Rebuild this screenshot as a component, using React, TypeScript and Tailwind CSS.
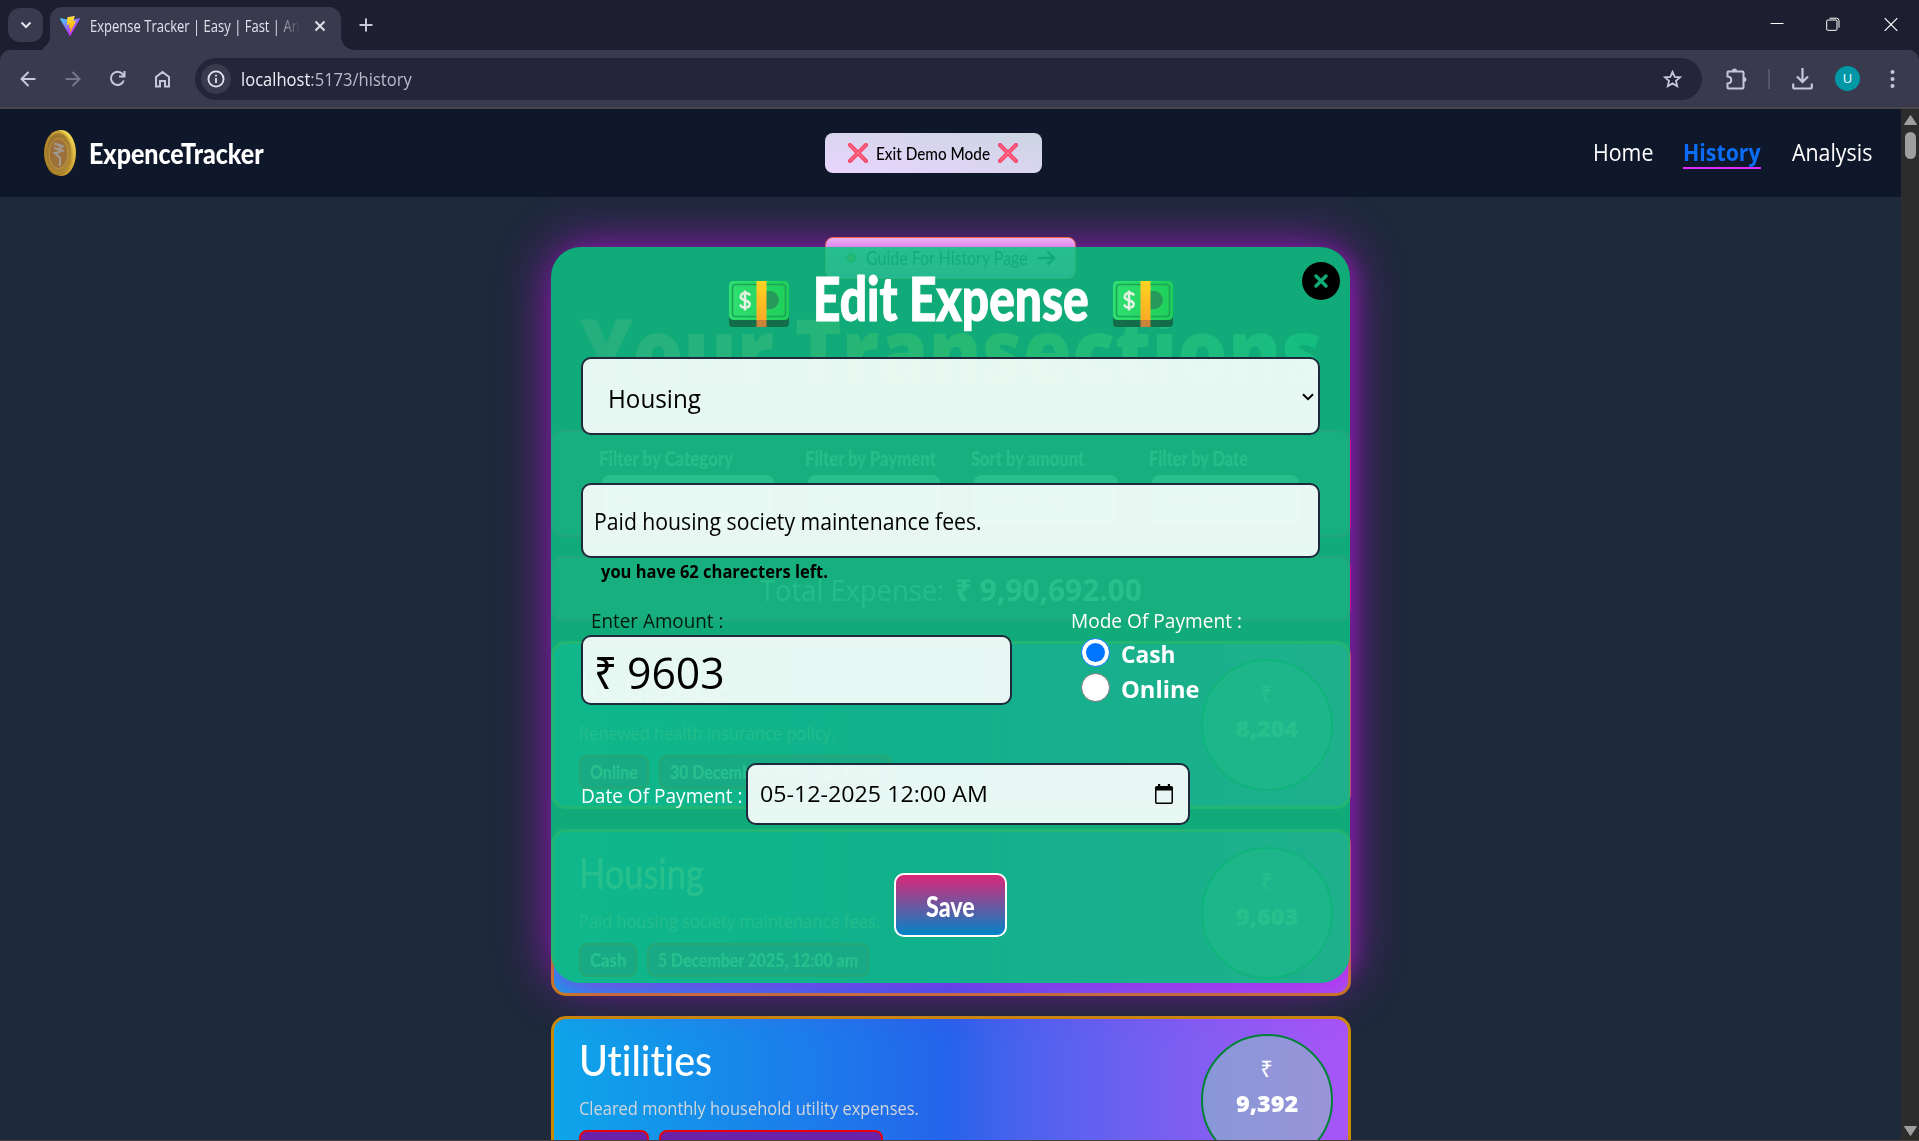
import { useLayoutEffect, useRef, useState, type ReactNode } from "react";

const HAND = "font-['Lato',sans-serif] [font-variant-ligatures:none]";

/** One line of text, stretched or condensed horizontally to a given width. */
function Fit({ w, className = "", inner = "", children }: { w: number; className?: string; inner?: string; children: ReactNode }) {
  const ref = useRef<HTMLSpanElement>(null);
  const [scale, setScale] = useState(1);
  useLayoutEffect(() => {
    if (ref.current) setScale(w / ref.current.offsetWidth);
  }, [w]);
  return (
    <span className={`block shrink-0 whitespace-nowrap ${className}`} style={{ width: w }}>
      <span ref={ref} className={`inline-block origin-left align-top ${inner}`} style={{ transform: `scaleX(${scale})` }}>
        {children}
      </span>
    </span>
  );
}

function ViteLogo() {
  return (
    <svg width="20" height="20" viewBox="0 0 256 257">
      <defs>
        <linearGradient id="va" x1="-.8%" x2="57.6%" y1="7.6%" y2="78.4%">
          <stop offset="0%" stopColor="#41D1FF" />
          <stop offset="100%" stopColor="#BD34FE" />
        </linearGradient>
        <linearGradient id="vb" x1="43.4%" x2="50.3%" y1="2.2%" y2="89%">
          <stop offset="0%" stopColor="#FFEA83" />
          <stop offset="8%" stopColor="#FFDD35" />
          <stop offset="100%" stopColor="#FFA800" />
        </linearGradient>
      </defs>
      <path fill="url(#va)" d="M255.153 37.938 134.897 252.976c-2.483 4.44-8.862 4.466-11.382.048L.875 37.958c-2.746-4.814 1.371-10.646 6.827-9.67l120.385 21.517a6.537 6.537 0 0 0 2.322-.004l117.867-21.483c5.438-.991 9.574 4.796 6.877 9.62Z" />
      <path fill="url(#vb)" d="M185.432.063 96.44 17.501a3.268 3.268 0 0 0-2.634 3.014l-5.474 92.456a3.268 3.268 0 0 0 3.997 3.378l24.777-5.718c2.318-.535 4.413 1.507 3.936 3.838l-7.361 36.047c-.495 2.426 1.782 4.5 4.151 3.78l15.304-4.649c2.372-.72 4.652 1.36 4.15 3.788l-11.698 56.621c-.732 3.542 3.979 5.473 5.943 2.437l1.313-2.028 72.516-144.72c1.215-2.423-.88-5.186-3.54-4.672l-25.505 4.922c-2.396.462-4.435-1.77-3.759-4.114l16.646-57.705c.677-2.35-1.37-4.583-3.769-4.113Z" />
    </svg>
  );
}

function Coin() {
  return (
    <svg width="34" height="48" viewBox="0 0 34 48">
      <defs>
        <linearGradient id="rim" x1="0" y1="1" x2="1" y2="0">
          <stop offset="0" stopColor="#9a7220" />
          <stop offset=".55" stopColor="#b88c2c" />
          <stop offset="1" stopColor="#f0d04c" />
        </linearGradient>
        <linearGradient id="edge" x1="0" y1="0" x2="0" y2="1">
          <stop offset="0" stopColor="#f6de5a" />
          <stop offset="1" stopColor="#c79a30" />
        </linearGradient>
        <linearGradient id="face" x1="0" y1="0" x2="1" y2="1">
          <stop offset="0" stopColor="#96702a" />
          <stop offset="1" stopColor="#b08a3a" />
        </linearGradient>
      </defs>
      <ellipse cx="18.500" cy="24" rx="14.500" ry="23" fill="url(#edge)" />
      <ellipse cx="15.500" cy="24" rx="14.500" ry="22.500" fill="url(#rim)" />
      <ellipse cx="15.500" cy="24" rx="12.600" ry="20" fill="url(#face)" stroke="#b8922f" strokeWidth=".8" />
      <ellipse cx="15.500" cy="24.500" rx="9.500" ry="15" fill="#9c7038" stroke="#c49640" strokeWidth="1" />
      <path d="M11 14.500l10 3M11 19l10 3M13 15c7 2 6 9-1 9l5 5v8" fill="none" stroke="#a0978f" strokeWidth="2.200" />
    </svg>
  );
}

function Money() {
  return (
    <svg width="60" height="47" viewBox="0 0 60 47">
      <defs>
        <linearGradient id="note" x1="0" y1="0" x2="1" y2="0">
          <stop offset="0" stopColor="#2fdf70" />
          <stop offset="1" stopColor="#1fcf5a" />
        </linearGradient>
        <linearGradient id="band" x1="0" y1="0" x2="0" y2="1">
          <stop offset="0" stopColor="#ffd522" />
          <stop offset="1" stopColor="#fdaa25" />
        </linearGradient>
      </defs>
      <rect x="0" y="20" width="60" height="27" rx="4" fill="#146c4b" />
      <rect x="0" y="1" width="60" height="39" rx="4.500" fill="url(#note)" />
      <rect x="3.500" y="4.500" width="53" height="32" rx="3" fill="none" stroke="#1ba657" strokeWidth="1.600" />
      <circle cx="40.500" cy="20" r="9.300" fill="#27995a" />
      <path d="M21 15.500c-1-2-3-2.700-5-2.500-3 .2-4.500 2-4.300 4 .3 4.500 9 2.500 9 7 0 2.200-2 3.600-4.700 3.600-2.400 0-4.200-1.100-4.800-3.100M16 10.500v20" fill="none" stroke="#e4f2e4" strokeWidth="2.500" />
      <rect x="27.500" y="1" width="10" height="39" fill="url(#band)" />
      <rect x="27.500" y="40" width="10" height="7" fill="#c9833a" />
    </svg>
  );
}

function RedCross() {
  return (
    <svg width="20" height="20" viewBox="0 0 20 20">
      <path d="M2 2l16 16M18 2L2 18" stroke="#f8476b" strokeWidth="4.200" strokeLinecap="round" />
      <path d="M2 2l16 16M18 2L2 18" stroke="#fb6a86" strokeWidth="1.200" strokeLinecap="round" />
    </svg>
  );
}

function TabStrip() {
  return (
    <div className="flex h-[50px] bg-[#1d1e2f] pl-2">
      <div className="mt-2 flex h-[34px] w-[35px] items-center justify-center rounded-xl bg-[#393a4d]">
        <svg width="12" height="8" viewBox="0 0 12 8"><path d="M1.500 1.500L6 6l4.500-4.500" fill="none" stroke="#e3e3ee" strokeWidth="2" /></svg>
      </div>
      <svg className="mt-auto" width="7" height="12" viewBox="0 0 7 12"><path d="M7 0Q6 8 -5 12H7z" fill="#393a4d" /></svg>
      <div className="mt-[7px] flex h-[43px] w-[291px] items-center rounded-t-[12px] bg-[#393a4d] pb-[5px] pl-[10px]">
        <ViteLogo />
        <div className="ml-[10px] w-[210px] overflow-hidden text-[15.500px] leading-5 text-[#e3e3ee] [mask-image:linear-gradient(to_right,black_88%,transparent)]">
          <Fit w={210}>Expense Tracker | Easy | Fast | An</Fit>
        </div>
        <svg className="ml-[14px]" width="12" height="12" viewBox="0 0 12 12"><path d="M1.500 1.500l9 9M10.500 1.500l-9 9" stroke="#e3e3ee" strokeWidth="1.900" /></svg>
      </div>
      <svg className="mt-auto" width="14" height="14" viewBox="0 0 14 14"><path d="M0 0Q1 13 14 14H0z" fill="#393a4d" /></svg>
      <svg className="ml-[4px] mt-[18px]" width="14" height="14" viewBox="0 0 14 14"><path d="M7 .5v13M.5 7h13" stroke="#c7c7dc" strokeWidth="2" /></svg>
      <div className="ml-auto mr-[21px] flex pt-[17px]">
        <svg width="14" height="14"><path d="M.5 6.500h13" stroke="#fff" /></svg>
        <svg className="ml-[42px]" width="14" height="14" fill="none" stroke="#fff"><rect x=".7" y="3" width="10.300" height="10.300" rx="1" /><path d="M3.500 1.200h7a2.500 2.500 0 0 1 2.500 2.500v7" /></svg>
        <svg className="ml-[44px]" width="14" height="14"><path d="M.7 1.200l12.600 12.600M13.300 1.200L.7 13.800" stroke="#fff" strokeWidth="1.200" /></svg>
      </div>
    </div>
  );
}

function Toolbar() {
  const ic = "#c7c7dc";
  return (
    <div className="bg-[#1d1e2f]">
      <div className="flex h-[57px] items-center rounded-t-[10px] bg-[#393a4d] pl-5">
        <svg width="16" height="16" viewBox="0 0 16 16" fill="none" stroke={ic} strokeWidth="2"><path d="M15.500 8H2M8.500 1L1.500 8l7 7" /></svg>
        <svg className="ml-[29px]" width="16" height="16" viewBox="0 0 16 16" fill="none" stroke="#74748a" strokeWidth="2"><path d="M.5 8H14M7.500 1l7 7-7 7" /></svg>
        <svg className="ml-[28px]" width="17" height="17" viewBox="0 0 17 17" fill="none" stroke={ic} strokeWidth="2"><path d="M14.800 10.500A6.600 6.600 0 1 1 13.600 4L15 5.500M15.500 1v5.500H10" /></svg>
        <svg className="ml-[28px]" width="17" height="18" viewBox="0 0 17 18" fill="none" stroke={ic} strokeWidth="2"><path d="M2 16.500V7l6.500-5L15 7v9.500h-4V11H6v5.500z" /></svg>
        <div className="ml-[24px] flex h-[42px] w-[1507px] items-center rounded-full bg-[#242538] pl-[6px] pr-5">
          <div className="flex size-[30px] items-center justify-center rounded-full bg-[#393a4d]">
            <svg width="18" height="18" viewBox="0 0 18 18" fill="none" stroke="#e3e3ee" strokeWidth="1.800"><circle cx="9" cy="9" r="7.600" /><path d="M9 8v5M9 4.700v1.800" /></svg>
          </div>
          <Fit w={171} className="ml-[10px] text-[18px] leading-6 text-[#b9bacb]"><span className="text-[#eeeef6]">localhost</span>:5173/history</Fit>
          <svg className="ml-auto" width="19" height="18" viewBox="0 0 19 18" fill="none" stroke={ic} strokeWidth="1.800"><path d="M9.500 1.800l2.200 5 5.400.5-4.100 3.600 1.200 5.300-4.700-2.800-4.700 2.800L6 10.900 1.900 7.300l5.400-.5z" /></svg>
        </div>
        <svg className="ml-[23px]" width="22" height="22" viewBox="0 0 22 22" fill="none" stroke={ic} strokeWidth="2"><path d="M2.500 3.500h15a1 1 0 0 1 1 1v15a1 1 0 0 1-1 1h-14a1 1 0 0 1-1-1v-4c5-.5 5-6.500 0-7v-4a1 1 0 0 1 1-1z" /><path d="M7 3a2.500 2.500 0 0 1 5 0zM19 9a2.500 2.500 0 0 1 0 5z" fill={ic} stroke="none" /></svg>
        <div className="ml-[21px] h-5 w-[2px] bg-[#55566b]" />
        <svg className="ml-[22px]" width="21" height="22" viewBox="0 0 21 22" fill="none" stroke={ic} strokeWidth="2.200"><path d="M10.500 0v13.500M5 8.500l5.500 5.500L16 8.500M1.200 15.500v3.500a1.500 1.500 0 0 0 1.500 1.500h15.600a1.500 1.500 0 0 0 1.500-1.500v-3.500" /></svg>
        <div className="ml-[22px] flex size-[25px] items-center justify-center rounded-full bg-[#0097a7] text-[13px] text-white">U</div>
        <svg className="ml-[30px]" width="5" height="18" viewBox="0 0 5 18" fill={ic}><circle cx="2.500" cy="2" r="2" /><circle cx="2.500" cy="9" r="2" /><circle cx="2.500" cy="16" r="2" /></svg>
      </div>
    </div>
  );
}

function NavBar() {
  return (
    <nav className="flex h-[88px] shrink-0 items-center bg-[#0f172a]">
      <div className="ml-[43px]"><Coin /></div>
      <Fit w={175} className={`ml-3 text-[29px] font-black leading-10 text-white ${HAND}`}>ExpenceTracker</Fit>
      <div className="ml-[561px] flex h-10 w-[217px] items-center rounded-lg bg-gradient-to-tr from-[#e9d5ff] to-[#cbd5e1] pl-[23px]">
        <RedCross />
        <Fit w={114} className={`ml-2 text-[18px] font-medium leading-6 text-black ${HAND}`}>Exit Demo Mode</Fit>
        <div className="ml-2"><RedCross /></div>
      </div>
      <div className="ml-auto mr-[29px] flex pb-[2px] text-[23.500px] leading-8 text-white">
        <Fit w={60}>Home</Fit>
        <Fit w={78} className="ml-[30px] h-[33px] border-b-2 border-fuchsia-500 font-bold text-[#0b6cf5]">History</Fit>
        <Fit w={80} className="ml-[31px]">Analysis</Fit>
      </div>
    </nav>
  );
}

type Item = { title: string; tw: number; desc: string; dw: number; mode: string; mw: number; date: string; datew: number; amount: string };

const ITEMS: Item[] = [
  { title: "Insurance", tw: 150, desc: "Renewed health insurance policy.", dw: 256, mode: "Online", mw: 70, date: "30 December 2025, 12:00 am", datew: 232, amount: "8,204" },
  { title: "Housing", tw: 125, desc: "Paid housing society maintenance fees.", dw: 301, mode: "Cash", mw: 58, date: "5 December 2025, 12:00 am", datew: 222, amount: "9,603" },
  { title: "Utilities", tw: 133, desc: "Cleared monthly household utility expenses.", dw: 340, mode: "Online", mw: 70, date: "9 December 2025, 12:00 am", datew: 224, amount: "9,392" },
];

function Pill({ w, children }: { w: number; children: string }) {
  return (
    <div className="flex h-[34px] items-center justify-center rounded-lg border-2 border-red-600 bg-[#6b21a8]" style={{ width: w }}>
      <Fit w={w - 22} className={`text-[19px] font-black leading-6 text-white ${HAND}`}>{children}</Fit>
    </div>
  );
}

function Card({ it }: { it: Item }) {
  return (
    <div className="mb-5 flex h-[167.500px] w-[800px] shrink-0 justify-between rounded-[15px] border-[3px] border-[#ca8a04] bg-gradient-to-r from-[#0ea5e9] via-[#2563eb] to-[#a855f7] pl-[25px] pr-[15px]">
      <div>
        <Fit w={it.tw} className={`mt-[13px] text-[42px] font-medium leading-[56px] text-white ${HAND}`}>{it.title}</Fit>
        <Fit w={it.dw} className="mt-[6px] text-[18px] leading-7 text-gray-300">{it.desc}</Fit>
        <div className="mt-[8px] flex gap-[10px]">
          <Pill w={it.mw}>{it.mode}</Pill>
          <Pill w={it.datew}>{it.date}</Pill>
        </div>
      </div>
      <div className="mt-[15px] flex size-[132px] flex-col items-center rounded-full border-2 border-green-700 bg-[rgba(142,216,185,0.47)] text-white">
        <span className="mt-[16px] text-[22px] leading-8">₹</span>
        <Fit w={62} className="mt-[3px] text-[22px] font-extrabold leading-8">{it.amount}</Fit>
      </div>
    </div>
  );
}

function FilterField({ label, lw, w, value }: { label: string; lw: number; w: number; value: string }) {
  return (
    <div>
      <Fit w={lw} className={`text-[20px] font-black leading-7 text-gray-200 ${HAND}`}>{label}</Fit>
      <div className="ml-[3px] mt-[3px] h-[50px] rounded-lg bg-white pl-4 text-[18px] font-bold leading-[50px] text-gray-400" style={{ width: w }}>{value}</div>
    </div>
  );
}

function HistoryPage() {
  return (
    <div className="flex flex-1 flex-col items-center overflow-hidden bg-[#1e293b]">
      <div className="mt-10 flex h-[42px] w-[251px] shrink-0 items-center rounded-lg border border-orange-400 bg-gradient-to-b from-[#fdf2f8] to-[#f5b5fc] pl-5">
        <div className="size-[10px] rounded-full border border-green-600 bg-yellow-500" />
        <Fit w={162} className={`ml-[10px] text-[19px] leading-6 text-gray-800 ${HAND}`}>Guide For History Page</Fit>
        <svg className="ml-[9px]" width="19" height="16" viewBox="0 0 19 16" fill="none" stroke="#1f2937" strokeWidth="2.500"><path d="M1 8h16M10.500 1.500L17 8l-6.500 6.500" /></svg>
      </div>
      <Fit
        w={742}
        className="mt-[6px] h-[130px] text-[90px] font-extrabold leading-[128px]"
        inner="bg-gradient-to-r from-[#f0506e] via-yellow-500 to-[#4ade80] bg-clip-text text-transparent"
      >
        Your Transections
      </Fit>
      <div className="mt-[15px] flex h-[107px] w-[800px] shrink-0 rounded-xl border-2 border-pink-700 bg-[#64566a] pl-[46px] pt-[12px]">
        <div className="w-[206px]"><FilterField label="Filter by Category" lw={134} w={172} value="All" /></div>
        <div className="w-[166px]"><FilterField label="Filter by Payment" lw={131} w={132} value="All" /></div>
        <div className="w-[178px]"><FilterField label="Sort by amount" lw={113} w={144} value="No Filter" /></div>
        <FilterField label="Filter by Date" lw={99} w={147} value="No Filter" />
      </div>
      <div className="mb-5 mt-[19px] flex h-[65px] w-[800px] shrink-0 items-center justify-center gap-[11px] rounded-xl border-2 border-pink-700 bg-[#64566a] pt-[3px] text-[30px] leading-10 text-gray-300">
        <Fit w={184}>Total Expense:</Fit>
        <Fit w={187} className="font-bold text-white">₹ 9,90,692.00</Fit>
      </div>
      {ITEMS.map((it) => <Card key={it.title} it={it} />)}
    </div>
  );
}

const FIELD = "rounded-[10px] border-2 border-[#1e293b] bg-white/90 text-black";

function EditModal() {
  return (
    <div className="absolute left-[551px] top-[138px] h-[736px] w-[799px] rounded-[30px] bg-[#10b981]/90 px-[30px] shadow-[0_0_50px_rgba(192,20,230,0.75),6px_2px_16px_rgba(192,20,230,0.3)]">
      <div className="flex h-[110px] items-start justify-center">
        <div className="mt-[33px]"><Money /></div>
        <Fit w={276} className={`ml-[24px] mt-[15px] text-[60px] font-black leading-[72px] text-white [-webkit-text-stroke:1px_white] ${HAND}`}>Edit Expense</Fit>
        <div className="ml-[24px] mt-[33px]"><Money /></div>
      </div>
      <div className={`flex h-[78px] items-center pl-[25px] pr-1 ${FIELD}`}>
        <Fit w={93} className="mt-1 text-[25px] leading-8">Housing</Fit>
        <svg className="ml-auto mt-[2px]" width="12" height="8" viewBox="0 0 12 8"><path d="M1 1.200l5 5 5-5" fill="none" stroke="#000" strokeWidth="2" /></svg>
      </div>
      <div className={`mt-[48px] flex h-[75px] items-center pl-[11px] ${FIELD}`}>
        <Fit w={388} className="text-[23px] leading-8">Paid housing society maintenance fees.</Fit>
      </div>
      <Fit w={227} className="ml-5 mt-[2px] text-[17px] font-bold leading-6 text-black">you have 62 charecters left.</Fit>
      <div className="mt-[23px] flex">
        <div>
          <Fit w={132} className="ml-[10px] text-[20px] leading-7 text-black/85">Enter Amount :</Fit>
          <div className={`flex h-[70px] w-[431px] items-center pl-[11px] pt-[4px] text-[44px] leading-[60px] ${FIELD}`}>
            <Fit w={23}>₹</Fit>
            <Fit w={98} className="ml-[10px]">9603</Fit>
          </div>
        </div>
        <div className="ml-[59px] text-white">
          <Fit w={171} className="text-[20px] leading-7">Mode Of Payment :</Fit>
          <div className="ml-[10px] flex h-[35px] items-center">
            <div className="flex size-[29px] items-center justify-center rounded-full border border-[#0075ff] bg-white"><div className="size-[19px] rounded-full bg-[#0075ff]" /></div>
            <Fit w={55} className="ml-[11px] mt-[2px] text-[24px] font-bold leading-8">Cash</Fit>
          </div>
          <div className="ml-[10px] flex h-[35px] items-center">
            <div className="size-[29px] rounded-full border border-[#767676] bg-white" />
            <Fit w={78} className="ml-[11px] mt-[2px] text-[24px] font-bold leading-8">Online</Fit>
          </div>
        </div>
      </div>
      <div className="mt-[58px] flex h-[62px] items-center">
        <Fit w={161} className="mt-[3px] text-[20px] leading-7 text-white">Date Of Payment :</Fit>
        <div className={`ml-[4px] flex h-[62px] w-[444px] items-center pl-[12px] pr-[15px] ${FIELD}`}>
          <Fit w={228} className="text-[22.500px] leading-8">05-12-2025 12:00 AM</Fit>
          <svg className="ml-auto" width="18" height="20" viewBox="0 0 18 20"><path d="M3 0h2.200v2h7.600V0H15v2h1.200A1.800 1.800 0 0 1 18 3.800v14.400a1.800 1.800 0 0 1-1.800 1.800H1.800A1.800 1.800 0 0 1 0 18.200V3.800A1.800 1.800 0 0 1 1.800 2H3zM1.500 6.500v12h15v-12z" fillRule="evenodd" /></svg>
        </div>
      </div>
      <div className="ml-[313px] mt-[48px] flex h-[64px] w-[113px] items-center justify-center rounded-[10px] border-2 border-white bg-[linear-gradient(to_bottom,#db2777,#0284c7)]">
        <Fit w={49} className={`mt-[2px] text-[28px] font-black leading-9 text-white ${HAND}`}>Save</Fit>
      </div>
      <div className="absolute right-[10px] top-[15px] flex size-[38px] items-center justify-center rounded-full bg-black">
        <svg width="14" height="14" viewBox="0 0 14 14"><path d="M2 2l10 10M12 2L2 12" stroke="#11ab7a" strokeWidth="3.400" strokeLinecap="round" /></svg>
      </div>
    </div>
  );
}

export default function App() {
  return (
    <div className="flex h-[1141px] w-[1919px] flex-col overflow-hidden bg-[#1d1e2f] font-['Open_Sans','Noto_Sans',sans-serif]">
      <TabStrip />
      <Toolbar />
      <div className="h-[2px] shrink-0 bg-[#48484c]" />
      <div className="flex h-[1031px] shrink-0">
        <main className="relative flex w-[1901px] flex-col overflow-hidden">
          <NavBar />
          <HistoryPage />
          <EditModal />
        </main>
        <div className="flex w-[18px] flex-col items-center bg-[#2c2c2c]">
          <svg className="mt-[6px]" width="13" height="10" viewBox="0 0 13 10"><path d="M6.500.5L12.500 9.500H.5z" fill="#9f9f9f" stroke="#9f9f9f" strokeLinejoin="round" /></svg>
          <div className="mt-[7px] h-[27px] w-[11px] rounded-full bg-[#9f9f9f]" />
          <svg className="mb-[4px] mt-auto" width="13" height="10" viewBox="0 0 13 10"><path d="M6.500 9.500L12.500.5H.5z" fill="#9f9f9f" stroke="#9f9f9f" strokeLinejoin="round" /></svg>
        </div>
      </div>
      <div className="h-px shrink-0 bg-[#4a4040]" />
    </div>
  );
}
